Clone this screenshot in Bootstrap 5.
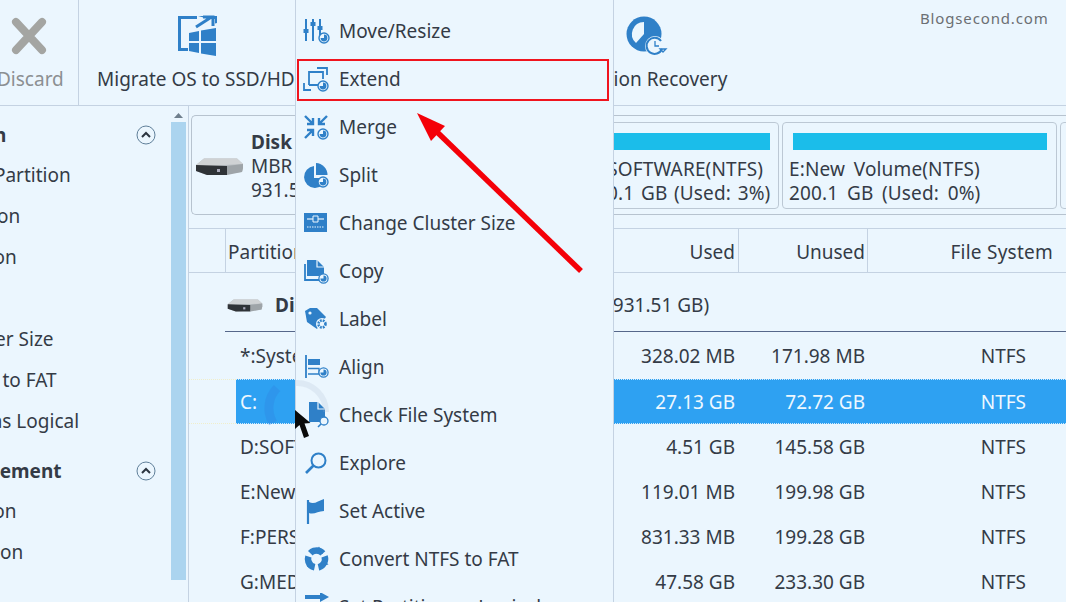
<!DOCTYPE html>
<html lang="en">
<head>
<meta charset="utf-8">
<title>Partition Wizard</title>
<link href="https://cdn.jsdelivr.net/npm/bootstrap@5.3.0/dist/css/bootstrap.min.css" rel="stylesheet">
<style>
:root{--app-bg:#ebf6fe;--app-line:#c4d2e2;--app-ink:#343b46;--app-blue:#2f80c8;}
html,body{height:100%;}
body{width:1066px;height:602px;overflow:hidden;background:var(--app-bg);color:var(--app-ink);font-family:"Noto Sans","Open Sans",sans-serif;font-size:19px;line-height:24px;position:relative;}
.top-bar{height:106px;border-bottom:1px solid var(--app-line);}
.tool-item{height:105px;padding-top:14px;white-space:nowrap;}
.tool-discard{width:79px;border-right:1px solid var(--app-line);color:#8b8f92;padding-left:0;}
.tool-discard span{margin-left:-3px;display:block;}
.tool-migrate{margin-left:18px;width:200px;}
.tool-recovery{margin-left:268px;width:168px;}
.tool-item svg{display:block;height:46px;margin-bottom:6px;}
.tool-label{display:block;line-height:26px;}
.work-area{height:496px;}
.side-pane{width:189px;flex:none;border-right:1px solid var(--app-line);overflow:hidden;position:relative;}
.side-list{margin-left:-123px;padding-top:17px;width:279px;}
.side-row{height:41px;line-height:24px;white-space:nowrap;}
.side-head{font-weight:700;height:40px;display:flex;justify-content:space-between;align-items:flex-start;}
.side-head span{margin-left:-31px;}
.side-head svg{width:20px;height:20px;margin-top:2px;}
.side-gap{margin-top:9px;}
.scroll-track{position:absolute;left:171px;top:0;width:15px;height:100%;}
.scroll-thumb{height:458px;margin-top:18px;background:#abd4ef;}
.scroll-up{display:block;margin:7px auto -14px;}
.main-pane{flex:1;min-width:0;overflow:hidden;}
.disk-strip{margin:9px 0 0 2px;height:100px;border:1px solid #b7c3cf;border-right:0;border-radius:5px 0 0 5px;padding:6px 0 4px 0;gap:3px;overflow:hidden;}
.disk-info{width:388px;flex:none;padding-left:3px;}
.disk-info svg{width:49px;height:20px;flex:none;margin-right:7px;}
.disk-name{font-weight:700;}
.part-card{flex:none;height:87px;border:1px solid #bcc8d4;border-radius:4px;background:transparent;padding:10px 6px 0 6px;white-space:nowrap;line-height:24px;word-spacing:3.5px;letter-spacing:.15px;}
.part-bar{height:17px;background:#1bbdea;margin:0 3px 7px 4px;}
.card-d{width:196px;padding-left:1px;word-spacing:1.5px;}
.card-d .part-bar{margin-right:2px;margin-left:9px;}
.card-d-title{padding-left:3px;}
.card-e{width:275px;}
.card-f{width:200px;}
.grid-wrap{margin-top:13px;}
.part-grid{table-layout:fixed;border-collapse:separate;border-spacing:0;width:877px;margin:0;color:var(--app-ink);}
.col-lead{width:36px;}
.col-gap{width:11px;}
.col-name{width:243px;}
.col-cap{width:133px;}
.col-used{width:126px;}
.col-free{width:129px;}
.col-fs{width:199px;}
.part-grid th,.part-grid td{padding:0;font-weight:400;white-space:nowrap;overflow:hidden;vertical-align:middle;}
.part-grid thead th{height:45px;padding-top:2px;border-top:1px solid var(--app-line);border-bottom:1px solid var(--app-line);}
.part-grid thead th+th{border-left:1px solid var(--app-line);}
.head-name{padding-left:2px !important;}
.num-cell{text-align:right;padding-right:3px !important;}
.free-cell{text-align:right;padding-right:2px !important;}
.fs-head{text-align:right;padding-right:13px !important;letter-spacing:.25px;}
.fs-cell{text-align:right;padding-right:40px !important;}
.name-cell{padding-left:4px !important;}
.disk-row td{height:59px;border-bottom:1px solid #56678a;padding-top:5px !important;}
.disk-row .lead-gap{border-bottom:0;}
.disk-row svg{width:36px;height:16px;margin:0 12px 0 2px;vertical-align:-1px;}
.disk-row b{font-weight:700;}
.disk-cap{display:inline-block;margin-left:68px;}
.data-row td{height:45px;}
.data-row.first-row td{height:47px;padding-top:1px !important;}
.sel-row td{border-top:1px dotted #f0eecb;border-bottom:1px dotted #f0eecb;}
.sel-row td+td{background:#2ea1f2;color:#eef8ff;border-color:#cfe9fb;}
.pop-menu{position:absolute;display:block;left:295px;top:0;width:319px;height:602px;min-width:0;margin:0;padding:7px 0 0;background:#ebf6fe;border:0;border-left:1px solid var(--app-line);border-right:1px solid var(--app-line);border-radius:0;overflow:hidden;font-size:19px;color:var(--app-ink);}
.pop-item{display:flex;align-items:center;height:48px;padding:0;color:var(--app-ink);white-space:nowrap;}
.pop-item:hover{background:transparent;color:var(--app-ink);}
.pop-item svg{width:28px;height:28px;margin-left:6px;margin-right:9px;flex:none;}
.water-mark{position:absolute;z-index:1010;left:920px;top:8px;font-size:15px;line-height:20px;color:#6b6f73;letter-spacing:.85px;}
.red-box{position:absolute;z-index:1010;left:297px;top:59px;width:312px;height:42px;border:2px solid #f0141e;}
.over-art{position:absolute;z-index:1020;left:0;top:0;width:1066px;height:602px;pointer-events:none;}
</style>
</head>
<body>
<svg width="0" height="0" class="d-none" aria-hidden="true">
  <symbol id="badge" viewBox="0 0 12 12"><circle cx="6" cy="6" r="5" fill="#ebf6fe" stroke="#2f80c8" stroke-width="1.4"/><path d="M6 2.600V6H2.600A3.400 3.400 0 1 0 6 2.600Z" fill="#2f80c8"/></symbol>
  <symbol id="hdd" viewBox="0 0 49 20"><path d="M1 9 9 2.500H42L48 8V12L47 16 12 19 1 15Z" fill="#b6bcc0"/><path d="M9 2.500H42L48 8 11 10 1 9Z" fill="#cfd2d4"/><path d="M1 9 32 10V19L12 19 1 15Z" fill="#2f3337"/><path d="M32 10 48 8V12L47 16 32 19Z" fill="#9ea4a8"/><rect x="22" y="13" width="3" height="3" fill="#aab"/></symbol>
</svg>

<div class="top-bar d-flex position-relative">
  <div class="tool-item tool-discard">
    <svg viewBox="0 0 58 46" width="58"><path d="M16 8 42 36M42 8 16 36" stroke="#a4a5a2" stroke-width="8" stroke-linecap="round" fill="none"/></svg>
    <span class="tool-label">Discard</span>
  </div>
  <div class="tool-item tool-migrate">
    <svg viewBox="0 0 200 46" width="200">
      <path d="M100 2H81V37H91V34H84V5H100Z" fill="#2f80c8"/><path d="M101 2h19v7l-2 .5V5h-6z" fill="#2f80c8"/>
      <path d="M99 13 113 4M106 3h10v9" stroke="#2f80c8" stroke-width="3" fill="none"/>
      <path d="M92 19 102 17V27H92ZM104 16.600 119 14V27H104ZM92 29H102V39L92 37ZM104 29H119V42L104 39.500Z" fill="#2f80c8"/>
    </svg>
    <span class="tool-label">Migrate OS to SSD/HD</span>
  </div>
  <div class="tool-item tool-recovery">
    <svg viewBox="0 0 168 46" width="168">
      <circle cx="79" cy="20" r="17.500" fill="#2f80c8"/>
      <path d="M79 8A12 12 0 0 0 71 29L79 20Z" fill="#ebf6fe"/>
      <circle cx="90" cy="32" r="10" fill="#ebf6fe"/>
      <path d="M97 35A8 8 0 1 1 96 27" stroke="#2f80c8" stroke-width="2" fill="none"/>
      <path d="M90 27V32H94M95 35h6l-3 3z" stroke="#2f80c8" stroke-width="1.300" fill="none"/>
    </svg>
    <span class="tool-label">Partition Recovery</span>
  </div>
</div>

<div class="work-area d-flex">
  <aside class="side-pane">
    <div class="side-list">
      <div class="side-row side-head"><span>Change Partition</span><svg viewBox="0 0 20 20"><circle cx="10" cy="10" r="9" fill="none" stroke="#5f7f99" stroke-width="1"/><path d="M6 12 10 8l4 4" fill="none" stroke="#2c3540" stroke-width="2"/></svg></div>
      <div class="side-row">Move/Resize Partition</div>
      <div class="side-row">Extend Partition</div>
      <div class="side-row">Merge Partition</div>
      <div class="side-row">Split Partition</div>
      <div class="side-row">Change Cluster Size</div>
      <div class="side-row">Convert NTFS to FAT</div>
      <div class="side-row">Set Partition as Logical</div>
      <div class="side-row side-head side-gap"><span>Partition Management</span><svg viewBox="0 0 20 20"><circle cx="10" cy="10" r="9" fill="none" stroke="#5f7f99" stroke-width="1"/><path d="M6 12 10 8l4 4" fill="none" stroke="#2c3540" stroke-width="2"/></svg></div>
      <div class="side-row">Delete Partition</div>
      <div class="side-row">Format Partition</div>
    </div>
    <div class="scroll-track">
      <svg class="scroll-up" width="9" height="5" viewBox="0 0 9 5"><path d="M0 5 4.500 0 9 5Z" fill="#6f7f8d"/></svg>
      <div class="scroll-thumb"></div>
    </div>
  </aside>

  <main class="main-pane">
    <div class="disk-strip d-flex">
      <div class="disk-info d-flex align-items-center">
        <svg><use href="#hdd"/></svg>
        <div><div class="disk-name">Disk 1</div><div>MBR</div><div>931.51 GB</div></div>
      </div>
      <div class="part-card card-d"><div class="part-bar"></div><span class="card-d-title">D:SOFTWARE(NTFS)</span><br>150.1 GB (Used: 3%)</div>
      <div class="part-card card-e"><div class="part-bar"></div>E:New Volume(NTFS)<br>200.1 GB (Used: 0%)</div>
      <div class="part-card card-f"><div class="part-bar"></div>F:PERSONAL(NTFS)<br>200.1 GB (Used: 0%)</div>
    </div>
    <div class="grid-wrap">
      <table class="part-grid">
        <colgroup><col class="col-lead"><col class="col-gap"><col class="col-name"><col class="col-cap"><col class="col-used"><col class="col-free"><col class="col-fs"></colgroup>
        <thead><tr><th></th><th colspan="2" class="head-name">Partition</th><th class="num-cell">Capacity</th><th class="num-cell">Used</th><th class="free-cell">Unused</th><th class="fs-head">File System</th></tr></thead>
        <tbody>
          <tr class="disk-row"><td class="lead-gap"></td><td colspan="6"><svg><use href="#hdd"/></svg><b>Disk 1</b> (WDC WD10EZEX SATA, <span class="disk-cap">931.51 GB)</span></td></tr>
          <tr class="data-row first-row"><td colspan="2"></td><td class="name-cell">*:System Reserved</td><td class="num-cell">500.00 MB</td><td class="num-cell">328.02 MB</td><td class="free-cell">171.98 MB</td><td class="fs-cell">NTFS</td></tr>
          <tr class="data-row sel-row"><td colspan="2"></td><td class="name-cell">C:</td><td class="num-cell">99.85 GB</td><td class="num-cell">27.13 GB</td><td class="free-cell">72.72 GB</td><td class="fs-cell">NTFS</td></tr>
          <tr class="data-row"><td colspan="2"></td><td class="name-cell">D:SOFTWARE</td><td class="num-cell">150.09 GB</td><td class="num-cell">4.51 GB</td><td class="free-cell">145.58 GB</td><td class="fs-cell">NTFS</td></tr>
          <tr class="data-row"><td colspan="2"></td><td class="name-cell">E:New Volume</td><td class="num-cell">200.10 GB</td><td class="num-cell">119.01 MB</td><td class="free-cell">199.98 GB</td><td class="fs-cell">NTFS</td></tr>
          <tr class="data-row"><td colspan="2"></td><td class="name-cell">F:PERSONAL</td><td class="num-cell">200.11 GB</td><td class="num-cell">831.33 MB</td><td class="free-cell">199.28 GB</td><td class="fs-cell">NTFS</td></tr>
          <tr class="data-row"><td colspan="2"></td><td class="name-cell">G:MEDIA</td><td class="num-cell">233.35 GB</td><td class="num-cell">47.58 GB</td><td class="free-cell">233.30 GB</td><td class="fs-cell">NTFS</td></tr>
        </tbody>
      </table>
    </div>
  </main>
</div>

<div class="dropdown-menu show pop-menu">
  <a class="dropdown-item pop-item" href="#"><svg viewBox="0 0 28 28"><g stroke="#2f80c8" stroke-width="2" fill="none"><path d="M4 2V24M11 2V24M18 2V18"/></g><g fill="#2f80c8"><rect x="1.500" y="12" width="5" height="4"/><rect x="8.500" y="5" width="5" height="4"/><rect x="15.500" y="9" width="5" height="4"/></g><use href="#badge" x="16" y="15" width="12" height="12"/></svg>Move/Resize</a>
  <a class="dropdown-item pop-item" href="#"><svg viewBox="0 0 28 28"><g stroke="#2f80c8" stroke-width="1.800" fill="none"><path d="M7 20V7H21V14M7 20h9"/><path d="M15 3H25V10M9 25H2V18"/></g><use href="#badge" x="15" y="15" width="12" height="12"/></svg>Extend</a>
  <a class="dropdown-item pop-item" href="#"><svg viewBox="0 0 28 28"><g stroke="#2f80c8" stroke-width="2.400" fill="none"><path d="M3 3 11 11M11 5V11H5M25 3 17 11M17 5V11H23M3 25 11 17M5 17H11V23"/></g><use href="#badge" x="15" y="15" width="12" height="12"/></svg>Merge</a>
  <a class="dropdown-item pop-item" href="#"><svg viewBox="0 0 28 28"><path d="M12 5A11 11 0 1 0 24 17H12Z" fill="#2f80c8"/><path d="M14 2A12 12 0 0 1 25.500 14H14Z" fill="#2f80c8"/><use href="#badge" x="15" y="15" width="12" height="12"/></svg>Split</a>
  <a class="dropdown-item pop-item" href="#"><svg viewBox="0 0 28 28"><rect x="2" y="4" width="23" height="19" fill="#2f80c8"/><path d="M5 10H22" stroke="#ebf6fe" stroke-width="1.200"/><path d="M5 18H22" stroke="#ebf6fe" stroke-width="1" stroke-dasharray="1.500 1"/><path d="M11 7H16V13H11Z" fill="#2f80c8" stroke="#ebf6fe"/></svg>Change Cluster Size</a>
  <a class="dropdown-item pop-item" href="#"><svg viewBox="0 0 28 28"><path d="M5 3H15L22 10V19H5Z" fill="#2f80c8"/><path d="M15 3V10H22" fill="none" stroke="#ebf6fe" stroke-width="1.200"/><path d="M3 7V23H17" fill="none" stroke="#2f80c8" stroke-width="1.800"/><use href="#badge" x="16" y="16" width="11" height="11"/></svg>Copy</a>
  <a class="dropdown-item pop-item" href="#"><svg viewBox="0 0 28 28"><path d="M3 6 8 3 15 3 24 12 15 24 5 17Z" fill="#2f80c8"/><circle cx="8" cy="8" r="1.600" fill="#ebf6fe"/><circle cx="20" cy="19" r="6" fill="#ebf6fe"/><circle cx="20" cy="19" r="3.500" fill="none" stroke="#2f80c8" stroke-width="2.600" stroke-dasharray="1.800 1"/></svg>Label</a>
  <a class="dropdown-item pop-item" href="#"><svg viewBox="0 0 28 28"><path d="M4 2V25" stroke="#2f80c8" stroke-width="1.800"/><rect x="6" y="6" width="12" height="6" fill="#2f80c8"/><path d="M6 15.500H17V21H6" fill="none" stroke="#2f80c8" stroke-width="1.300"/><use href="#badge" x="16" y="14" width="11" height="11"/></svg>Align</a>
  <a class="dropdown-item pop-item" href="#"><svg viewBox="0 0 28 28"><path d="M7 1H16L23 8V21H7Z" fill="#2f80c8"/><path d="M16 1V8H23" fill="none" stroke="#ebf6fe" stroke-width="1.200"/><circle cx="22" cy="20" r="4" fill="#ebf6fe" stroke="#2f80c8" stroke-width="1.300"/><path d="M19 23 16 26" stroke="#2f80c8" stroke-width="1.600"/></svg>Check File System</a>
  <a class="dropdown-item pop-item" href="#"><svg viewBox="0 0 28 28"><circle cx="16.500" cy="11.500" r="7" fill="none" stroke="#2f80c8" stroke-width="2"/><path d="M11.500 16.500 4 24" stroke="#2f80c8" stroke-width="2.600"/></svg>Explore</a>
  <a class="dropdown-item pop-item" href="#"><svg viewBox="0 0 28 28"><path d="M6 3V27" stroke="#2f80c8" stroke-width="2.200"/><path d="M7 5C12 8 16 4 22 2V14C16 14 12 18 7 16Z" fill="#2f80c8"/></svg>Set Active</a>
  <a class="dropdown-item pop-item" href="#"><svg viewBox="0 0 28 28"><g transform="rotate(-18 14.500 14)"><circle cx="14.500" cy="14" r="8.500" fill="none" stroke="#2f80c8" stroke-width="6.500" stroke-dasharray="14 3.800"/></g><path d="M17 1.500 21 9 13 8ZM26.500 19.500 19 21 21 14ZM5 22 9 15 12 22Z" fill="#2f80c8"/></svg>Convert NTFS to FAT</a>
  <a class="dropdown-item pop-item" href="#"><svg viewBox="0 0 28 28"><path d="M3 2H18V-1L27 4 18 9V6H3Z" fill="#2f80c8"/><path d="M25 14H10V11L2 16 10 21V18H25Z" fill="#2f80c8"/></svg>Set Partition as Logical</a>
</div>

<div class="water-mark">Blogsecond.com</div>
<div class="red-box"></div>

<svg class="over-art" viewBox="0 0 1066 602" aria-hidden="true">
  <path d="M273 423A29 29 0 0 1 277 388" fill="none" stroke="#2f86e2" stroke-opacity=".38" stroke-width="9"/>
  <path d="M296 383A29 29 0 0 1 326 412" fill="none" stroke="#9fb4c9" stroke-opacity=".18" stroke-width="6"/>
  <path d="M581 271 436 131" stroke="#f40008" stroke-width="5.500" fill="none"/>
  <path d="M417 113 445 126 431 141Z" fill="#f40008"/>
  <path d="M295 410V429L299.500 425 304 438 309 436 304.500 423.500 310.500 423Z" fill="#0a0a0a"/>
</svg>

<script src="https://cdn.jsdelivr.net/npm/bootstrap@5.3.0/dist/js/bootstrap.bundle.min.js"></script>
</body>
</html>
